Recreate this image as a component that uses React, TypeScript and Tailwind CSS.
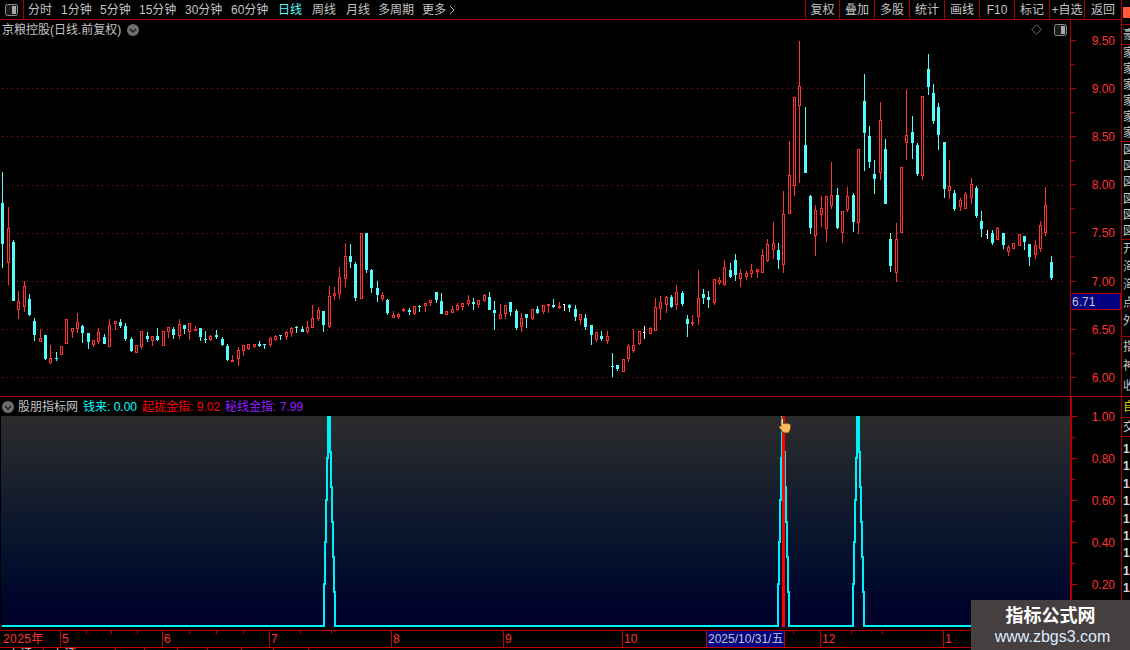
import React from 'react';

type Candle = [number, number, number, number, number, string];

// coordinates read off the crops: x*3, y*3 relative to the crop origin
const candleSets: { ox: number; oy: number; items: Candle[] }[] = [
  {
    ox: 0,
    oy: 170,
    items: [
      [7, 7, 99, 221, 293, 'c'], [25, 111, 175, 278, 345, 'r'], [40, 210, 216, 392, 392, 'c'], [55, 363, 394, 421, 446, 'r'],
      [73, 334, 349, 412, 426, 'r'], [88, 372, 388, 435, 438, 'c'], [103, 445, 453, 494, 513, 'c'], [121, 477, 505, 515, 515, 'r'],
      [136, 495, 495, 567, 570, 'c'], [151, 525, 565, 579, 581, 'r'], [169, 546, 565, 567, 573, 'c'], [184, 529, 529, 556, 556, 'r'],
      [199, 448, 448, 521, 521, 'r'], [217, 475, 475, 485, 503, 'r'], [232, 430, 457, 476, 489, 'r'], [247, 465, 468, 488, 518, 'c'],
      [265, 489, 489, 515, 537, 'c'], [280, 511, 511, 524, 530, 'r'], [295, 475, 487, 515, 522, 'r'], [313, 492, 501, 521, 521, 'c'],
      [328, 447, 466, 530, 530, 'r'], [346, 452, 454, 461, 480, 'r'], [361, 447, 457, 468, 474, 'c'], [376, 460, 468, 507, 513, 'c'],
      [394, 501, 507, 543, 546, 'c'], [409, 526, 526, 548, 548, 'r'], [424, 484, 484, 530, 537, 'r'], [442, 487, 499, 507, 516, 'c'],
      [457, 499, 499, 513, 528, 'r'], [472, 474, 499, 510, 514, 'c'], [490, 484, 484, 527, 527, 'r'], [505, 472, 472, 485, 504, 'r'],
      [520, 471, 477, 495, 507, 'c'], [538, 447, 463, 497, 507, 'r'], [553, 465, 465, 477, 492, 'c'], [568, 458, 460, 485, 510, 'r'],
      [586, 468, 477, 482, 484, 'R'], [601, 474, 474, 501, 513, 'c'], [616, 483, 507, 510, 519, 'c'], [631, 496, 499, 510, 513, 'r'],
      [649, 480, 495, 501, 507, 'c'], [667, 502, 507, 525, 528, 'c'], [682, 522, 528, 570, 573, 'c'], [697, 556, 571, 576, 576, 'R'],
      [715, 532, 541, 567, 587, 'r'], [730, 525, 526, 542, 558, 'r'], [745, 522, 523, 537, 540, 'r'], [763, 523, 523, 531, 534, 'r'],
      [778, 514, 522, 528, 531, 'c'], [793, 522, 522, 524, 537, 'c'], [811, 502, 504, 525, 531, 'r'], [826, 496, 498, 510, 513, 'r'],
      [841, 495, 495, 497, 510, 'c'], [859, 483, 487, 500, 510, 'r'], [874, 471, 474, 488, 501, 'r'], [889, 468, 471, 474, 489, 'c'],
      [907, 468, 477, 486, 486, 'c'], [922, 453, 472, 485, 489, 'r'], [937, 405, 445, 473, 474, 'r'], [955, 411, 421, 447, 453, 'r'],
      [970, 423, 423, 465, 486, 'c'], [988, 348, 378, 470, 474, 'r'],
    ],
  },
  {
    ox: 330,
    oy: 220,
    items: [
      [13, 201, 220, 228, 240, 'r'], [28, 141, 172, 221, 237, 'r'], [46, 69, 108, 177, 201, 'r'], [61, 72, 108, 126, 144, 'c'],
      [76, 126, 132, 234, 243, 'c'], [94, 39, 39, 236, 236, 'r'], [109, 39, 39, 150, 159, 'c'], [124, 148, 150, 204, 219, 'c'],
      [142, 183, 204, 225, 246, 'c'], [157, 216, 225, 237, 243, 'r'], [172, 237, 240, 279, 285, 'c'], [190, 273, 285, 293, 293, 'r'],
      [205, 279, 282, 291, 297, 'r'], [220, 264, 267, 273, 276, 'R'], [238, 264, 270, 276, 285, 'c'], [253, 258, 258, 282, 285, 'r'],
      [268, 255, 258, 260, 276, 'c'], [286, 249, 249, 258, 276, 'r'], [301, 240, 240, 248, 258, 'r'], [319, 216, 216, 240, 249, 'c'],
      [334, 219, 243, 282, 282, 'c'], [349, 274, 274, 285, 285, 'r'], [367, 258, 267, 279, 279, 'r'], [382, 249, 255, 270, 273, 'r'],
      [397, 249, 249, 261, 270, 'r'], [415, 225, 240, 252, 258, 'r'], [430, 234, 246, 252, 270, 'c'], [445, 240, 240, 255, 264, 'r'],
      [463, 222, 225, 243, 246, 'r'], [478, 216, 231, 270, 270, 'c'], [493, 243, 270, 279, 330, 'c'], [511, 252, 282, 297, 297, 'r'],
      [526, 255, 255, 282, 297, 'r'], [541, 246, 246, 276, 288, 'c'], [559, 267, 273, 324, 330, 'c'], [574, 279, 294, 321, 336, 'r'],
      [589, 282, 282, 294, 324, 'c'], [607, 267, 267, 297, 300, 'r'], [622, 258, 267, 279, 282, 'c'], [640, 255, 255, 276, 282, 'r'],
      [655, 252, 252, 258, 279, 'R'], [670, 237, 255, 261, 264, 'c'], [688, 246, 258, 264, 267, 'R'], [703, 252, 252, 254, 273, 'w'],
      [718, 252, 255, 264, 276, 'c'], [736, 255, 267, 291, 303, 'c'], [751, 282, 282, 300, 315, 'r'], [766, 282, 294, 321, 330, 'c'],
      [784, 315, 315, 345, 375, 'c'], [799, 336, 336, 360, 366, 'r'], [814, 333, 348, 357, 363, 'c'], [832, 333, 348, 363, 372, 'r'],
      [847, 399, 438, 440, 471, 'c'], [862, 435, 435, 447, 453, 'c'], [880, 417, 417, 456, 456, 'r'], [895, 372, 378, 417, 426, 'r'],
      [910, 327, 375, 393, 399, 'r'], [928, 333, 333, 372, 375, 'r'], [943, 318, 336, 338, 357, 'w'], [961, 321, 324, 342, 342, 'r'],
      [976, 234, 261, 333, 333, 'r'],
    ],
  },
  {
    ox: 660,
    oy: 30,
    items: [
      [0, 798, 817, 837, 870, 'r'], [19, 798, 801, 825, 849, 'r'], [34, 795, 801, 831, 834, 'c'], [49, 765, 786, 825, 840, 'r'],
      [67, 783, 789, 822, 828, 'c'], [82, 855, 867, 882, 921, 'c'], [97, 855, 876, 882, 888, 'R'], [115, 720, 804, 861, 885, 'r'],
      [130, 777, 792, 804, 822, 'c'], [145, 783, 801, 810, 834, 'c'], [163, 747, 747, 819, 825, 'r'], [178, 741, 750, 759, 765, 'r'],
      [193, 690, 711, 765, 768, 'r'], [211, 699, 720, 741, 744, 'c'], [226, 672, 690, 735, 753, 'c'], [241, 717, 729, 747, 771, 'r'],
      [259, 723, 729, 741, 750, 'r'], [274, 702, 720, 732, 744, 'r'], [292, 717, 717, 725, 744, 'r'], [307, 657, 675, 729, 729, 'r'],
      [322, 627, 642, 693, 696, 'r'], [340, 576, 639, 660, 687, 'r'], [355, 639, 660, 690, 717, 'c'], [370, 483, 552, 705, 729, 'r'],
      [388, 333, 435, 552, 552, 'r'], [403, 201, 201, 468, 498, 'r'], [418, 33, 168, 228, 459, 'r'], [436, 231, 345, 429, 429, 'c'],
      [451, 495, 498, 594, 612, 'c'], [466, 525, 540, 618, 678, 'r'], [484, 498, 534, 555, 591, 'r'], [499, 498, 498, 597, 636, 'r'],
      [514, 396, 495, 528, 537, 'r'], [532, 474, 495, 594, 597, 'c'], [547, 543, 543, 609, 639, 'r'], [562, 471, 498, 540, 546, 'r'],
      [580, 489, 495, 576, 606, 'c'], [595, 357, 357, 579, 612, 'r'],
    ],
  },
  {
    ox: 860,
    oy: 40,
    items: [
      [13, 102, 183, 279, 393, 'c'], [28, 258, 288, 366, 384, 'c'], [43, 360, 402, 417, 462, 'c'], [61, 186, 240, 399, 420, 'r'],
      [76, 297, 327, 492, 492, 'c'], [91, 579, 597, 678, 696, 'c'], [109, 549, 597, 699, 726, 'r'], [124, 381, 381, 579, 579, 'r'],
      [139, 147, 285, 309, 360, 'r'], [157, 228, 276, 309, 357, 'c'], [172, 309, 315, 402, 408, 'c'], [187, 168, 168, 408, 420, 'r'],
      [205, 42, 87, 141, 165, 'c'], [220, 132, 159, 243, 252, 'c'], [235, 189, 201, 285, 330, 'c'], [253, 306, 306, 447, 474, 'c'],
      [268, 360, 438, 453, 477, 'r'], [283, 450, 459, 507, 513, 'c'], [301, 474, 480, 501, 513, 'r'], [316, 456, 462, 507, 507, 'r'],
      [334, 414, 432, 474, 492, 'r'], [349, 438, 444, 528, 534, 'c'], [364, 513, 543, 567, 591, 'c'], [382, 570, 582, 584, 597, 'w'],
      [397, 570, 579, 609, 615, 'c'], [412, 561, 564, 600, 600, 'r'], [430, 579, 579, 615, 627, 'c'], [445, 615, 621, 636, 648, 'r'],
      [460, 609, 609, 627, 627, 'r'], [478, 582, 582, 618, 618, 'r'], [493, 588, 588, 606, 630, 'c'], [508, 612, 612, 651, 678, 'c'],
      [526, 600, 615, 645, 657, 'r'], [541, 543, 555, 627, 636, 'r'], [556, 441, 495, 579, 588, 'r'], [574, 648, 666, 714, 720, 'c'],
    ],
  },
];

const RED = '#ff3232';
const CYAN = '#54fcfc';

function Candles() {
  const nodes: React.ReactNode[] = [];
  candleSets.forEach((set) => {
    set.items.forEach(([xz, hiZ, topZ, botZ, lowZ, kind]) => {
      const x = set.ox + Math.floor(xz / 3);
      const hi = set.oy + Math.round(hiZ / 3);
      const top = set.oy + Math.round(topZ / 3);
      const bot = set.oy + Math.round(botZ / 3);
      const low = set.oy + Math.round(lowZ / 3);
      const color = kind === 'c' ? CYAN : kind === 'w' ? '#ffffff' : RED;
      const key = `${x}-${top}`;
      nodes.push(<rect key={`${key}-h`} x={x} y={hi} width={1} height={Math.max(top - hi, 0)} fill={color} />);
      nodes.push(<rect key={`${key}-l`} x={x} y={bot} width={1} height={Math.max(low - bot, 0)} fill={color} />);
      if (kind === 'r') {
        nodes.push(
          <rect key={`${key}-b`} x={x - 0.5} y={top + 0.5} width={2} height={Math.max(bot - top - 1, 1)} fill="#000" stroke={color} />,
        );
      } else if (kind === 'w') {
        nodes.push(<rect key={`${key}-b`} x={x - 1} y={top} width={2} height={1} fill={color} />);
        nodes.push(<rect key={`${key}-m`} x={x} y={hi} width={1} height={low - hi} fill={color} />);
      } else {
        nodes.push(<rect key={`${key}-b`} x={x - 1} y={top} width={3} height={Math.max(bot - top, 1)} fill={color} />);
      }
    });
  });
  return <>{nodes}</>;
}

function peakPoints(c: number) {
  const up = [584, 542, 500, 458, 416];
  const down = [452, 487, 522, 557, 592];
  const pts: string[] = [`${c - 5},626`];
  up.forEach((y, i) => {
    pts.push(`${c - 5 + i},${y}`, `${c - 4 + i},${y}`);
  });
  pts.pop();
  pts.push(`${c + 1},416`);
  down.forEach((y, i) => {
    pts.push(`${c + 1 + i},${y}`, `${c + 2 + i},${y}`);
  });
  pts.push(`${c + 6},626`);
  return pts.join(' ');
}

function PanelIcon() {
  return (
    <svg width="13" height="12" viewBox="0 0 13 12" className="shrink-0">
      <rect x="0.5" y="0.5" width="12" height="11" rx="2" fill="#1c1c1c" stroke="#8c8c8c" />
      <rect x="7" y="2" width="4" height="8" fill="#a8a8a8" />
    </svg>
  );
}

function DownBadge() {
  return (
    <svg width="12" height="12" viewBox="0 0 12 12" className="shrink-0">
      <circle cx="6" cy="6" r="6" fill="#6e6e6e" />
      <path d="M3 5l3 3 3-3" fill="none" stroke="#1a1a1a" strokeWidth="1.4" />
    </svg>
  );
}

const leftTabs = [
  { label: '分时', w: 'w-[33px]' },
  { label: '1分钟', w: 'w-[39px]' },
  { label: '5分钟', w: 'w-[39px]' },
  { label: '15分钟', w: 'w-[46px]' },
  { label: '30分钟', w: 'w-[46px]' },
  { label: '60分钟', w: 'w-[47px]' },
  { label: '日线', w: 'w-[34px]', active: true },
  { label: '周线', w: 'w-[34px]' },
  { label: '月线', w: 'w-[32px]' },
  { label: '多周期', w: 'w-[44px]' },
  { label: '更多', w: 'w-[36px]', more: true },
];

const rightTabs = [
  { label: '复权', w: 'w-[34px]' },
  { label: '叠加', w: 'w-[35px]' },
  { label: '多股', w: 'w-[35px]' },
  { label: '统计', w: 'w-[35px]' },
  { label: '画线', w: 'w-[35px]' },
  { label: 'F10', w: 'w-[35px]' },
  { label: '标记', w: 'w-[35px]' },
  { label: '+自选', w: 'w-[35px]' },
  { label: '返回', w: 'w-[37px]' },
];

const upperLabels = ['9.50', '9.00', '8.50', '8.00', '7.50', '7.00', '6.50', '6.00'];
const lowerLabels = ['1.00', '0.80', '0.60', '0.40', '0.20'];

const timeCells = [
  { label: '2025年', w: 'w-[60px]', first: true },
  { label: '5', w: 'w-[102px]' },
  { label: '6', w: 'w-[107px]' },
  { label: '7', w: 'w-[122px]' },
  { label: '8', w: 'w-[112px]' },
  { label: '9', w: 'w-[119px]' },
  { label: '10', w: 'w-[84px]' },
  { label: '2025/10/31/五', w: 'w-[78px]', hl: true },
  { label: '', w: 'w-[36px]' },
  { label: '12', w: 'w-[123px]' },
  { label: '1', w: 'flex-1' },
];

const bottomCells = ['w-[43px]', 'w-[30px]', 'w-[42px]', 'w-[29px]', 'w-[33px]', 'w-[30px]', 'w-[34px]', 'w-[32px]', 'w-[35px]', 'w-[23px]'];

const sidebarGroups = [
  { h: 'h-[20px]', rows: ['豪'] },
  { h: 'h-[97px]', rows: ['家', '家', '家', '家', '家', '家'] },
  { h: 'h-[98px]', rows: ['図', '図', '図', '図', '図', '図'] },
  { h: 'h-[97px]', rows: ['开', '海', '海', '点', '外', ''] },
  { h: 'h-[60px]', rows: ['指', '神', '收'] },
];

export default function App() {
  return (
    <div className="relative flex h-[650px] w-[1130px] overflow-hidden bg-black text-xs text-[#c4c4c4] [font-family:'Liberation_Sans','Noto_Sans_CJK_SC',sans-serif]">
      <div className="flex w-[1121px] flex-col">
        {/* toolbar */}
        <div className="flex h-5 items-center border-b border-[#a80000]">
          <div className="flex h-full w-6 items-center justify-center border-r border-[#a80000]">
            <PanelIcon />
          </div>
          <div className="flex pl-1">
            {leftTabs.map((t) => (
              <span key={t.label} className={`${t.w} flex items-center whitespace-nowrap ${t.active ? 'text-[#54fcfc]' : ''}`}>
                {t.label}
                {t.more && (
                  <svg width="6" height="10" viewBox="0 0 6 10" className="ml-[3px]">
                    <path d="M1 1l4 4-4 4" fill="none" stroke="#c4c4c4" />
                  </svg>
                )}
              </span>
            ))}
          </div>
          <div className="ml-auto flex h-full">
            {rightTabs.map((t) => (
              <span key={t.label} className={`${t.w} flex items-center justify-center whitespace-nowrap border-l border-[#a80000]`}>
                {t.label}
              </span>
            ))}
          </div>
        </div>

        {/* kline pane */}
        <div className="flex h-[377px] border-b border-[#b00000]">
          <div className="relative w-[1070px]">
            <svg width="1070" height="376" viewBox="0 20 1070 376" className="absolute inset-0" shapeRendering="crispEdges">
              {[88, 136, 185, 233, 281, 329, 377].map((y) => (
                <line key={y} x1="2" x2="1066" y1={y + 0.5} y2={y + 0.5} stroke="#981818" strokeDasharray="1 4" />
              ))}
              <Candles />
            </svg>
            <div className="relative flex h-[18px] items-center gap-[6px] pl-[2px] pt-[1px]">
              <span>京粮控股(日线.前复权)</span>
              <DownBadge />
              <div className="ml-auto flex items-center gap-[12px] pr-[3px]">
                <svg width="11" height="11" viewBox="0 0 11 11">
                  <path d="M5.5 .7l4.8 4.8-4.8 4.8L.7 5.500z" fill="none" stroke="#6e6e6e" />
                </svg>
                <PanelIcon />
              </div>
            </div>
          </div>
          <div className="relative flex-1 border-l border-[#b00000] pr-[6px] text-right text-[#ff3232]">
            <svg width="8" height="376" className="absolute left-0 top-0" shapeRendering="crispEdges">
              {upperLabels.map((l, i) => (
                <g key={l}>
                  <line x1="0" x2="5" y1={20.5 + i * 48.1} y2={20.5 + i * 48.1} stroke="#c00000" />
                  <line x1="0" x2="3" y1={44.5 + i * 48.1} y2={44.5 + i * 48.1} stroke="#c00000" />
                </g>
              ))}
            </svg>
            <div className="-mt-[3px]">
              {upperLabels.map((l) => (
                <div key={l} className="flex h-[48.1px] items-center justify-end">
                  {l}
                </div>
              ))}
            </div>
            <div className="absolute inset-x-0 top-[273px] flex h-[17px] items-center border-y border-r border-[#b00000] bg-[#000080] pl-[1px] text-left text-[#c4c4c4]">
              6.71
            </div>
          </div>
        </div>

        {/* indicator pane */}
        <div className="flex h-[233px]">
          <div className="w-[1070px]">
            <div className="flex h-[19px] items-center whitespace-nowrap pl-[2px]">
              <DownBadge />
              <span className="ml-1">股朋指标网</span>
              <span className="ml-[5px] text-[#00ffff]">钱来: 0.00</span>
              <span className="ml-[5px] text-[#ff0000]">起拢金指: 9.02</span>
              <span className="ml-[5px] text-[#9a1cff]">秘线金指: 7.99</span>
            </div>
            <div className="relative h-[214px]">
              <div className="ml-px h-[211px] bg-linear-to-b from-[#2c2c2c] to-[#00002a]" />
              <svg width="1070" height="214" viewBox="0 416 1070 214" className="absolute inset-0" shapeRendering="crispEdges">
                <polyline
                  points={`2,626 ${peakPoints(329)} ${peakPoints(783)} ${peakPoints(858)} 1070,626`}
                  fill="none"
                  stroke="#00f0f8"
                  strokeWidth="2"
                />
                <rect x="782" y="416" width="3" height="211" fill="#ff0000" />
              </svg>
              {/* mouse pointer resting on the red spike */}
              <svg width="14" height="17" viewBox="0 0 14 17" className="absolute left-[778px] top-[1px]">
                <path
                  d="M3 2c0-1.400 2.400-1.400 2.400 0v4.500h1.200c.8-.8 1.800-.6 2.200 0 .8-.6 1.800-.4 2.200.4.900-.3 1.800.3 1.800 1.300V12l-2 4H5.500L1 10.500c-.6-1.200.9-2.200 2-1.300z"
                  fill="#f9b95c"
                  stroke="#4a2c10"
                  strokeWidth="0.9"
                />
                <path d="M3.700 2h1v6h-1z" fill="#fff2d6" />
              </svg>
            </div>
          </div>
          <div className="relative flex-1 border-l-2 border-[#b00000] pr-[6px] text-right text-[#ff3232]">
            <svg width="8" height="233" className="absolute left-0 top-0" shapeRendering="crispEdges">
              {lowerLabels.map((l, i) => (
                <g key={l}>
                  <line x1="0" x2="5" y1={19.5 + i * 42} y2={19.5 + i * 42} stroke="#c00000" />
                  <line x1="0" x2="3" y1={40.5 + i * 42} y2={40.5 + i * 42} stroke="#c00000" />
                </g>
              ))}
            </svg>
            <div className="-mt-px">
              {lowerLabels.map((l) => (
                <div key={l} className="flex h-[42px] items-center justify-end">
                  {l}
                </div>
              ))}
            </div>
          </div>
        </div>

        {/* time axis */}
        <div className="relative flex h-[18px] border-y border-[#c00000] text-[#ff3232]">
          {timeCells.map((c) => (
            <div
              key={c.label || 'blank'}
              className={`${c.w} flex items-center whitespace-nowrap ${c.first ? 'pl-[3px] tracking-[0.4px]' : 'border-l border-[#c00000] pl-px'} ${c.hl ? 'bg-[#000080] text-[#c4c4c4]' : ''}`}
            >
              {c.label}
            </div>
          ))}
          <svg width="1070" height="3" className="absolute left-0 top-0" shapeRendering="crispEdges">
            {[86, 111, 137, 189, 216, 243, 300, 331, 793, 851, 882].map((x) => (
              <line key={x} x1={x + 0.5} x2={x + 0.5} y1="0" y2="3" stroke="#c00000" />
            ))}
          </svg>
        </div>
        <div className="flex h-[2px] overflow-hidden leading-none">
          {bottomCells.map((w, i) => (
            <div key={i} className={`${w} ${i ? 'border-l border-[#c00000]' : ''} whitespace-nowrap pl-2`}>
              {i < 2 ? '上证' : ''}
            </div>
          ))}
        </div>
      </div>

      {/* right side list, mostly cut off by the window edge */}
      <div className="flex w-[9px] flex-col overflow-hidden border-l border-[#a80000] leading-none">
        <div className="flex h-[25px] items-start border-b border-[#a80000] pl-[1px] pt-[7px]">
          <div className="h-[11px] w-[7px] bg-[#ff5a3c]" />
        </div>
        {sidebarGroups.map((g, i) => (
          <div key={i} className={`${g.h} flex flex-col justify-around whitespace-nowrap border-b border-[#a80000] pl-[1px]`}>
            {g.rows.map((r, j) => (
              <span key={j}>{r}</span>
            ))}
          </div>
        ))}
        <div className="flex h-[21px] items-center border-b border-[#a80000] pl-[1px] text-[#e0d000]">自</div>
        <div className="flex h-[19px] items-center border-b border-[#a80000] pl-[1px]">交</div>
        <div className="flex flex-col gap-[5px] pl-[1px] pt-[6px] font-bold">
          {Array.from({ length: 12 }).map((_, i) => (
            <span key={i} className="h-[12.400px] text-[#d8d8d8]">1</span>
          ))}
        </div>
      </div>

      {/* site watermark over the corner */}
      <div className="absolute bottom-0 right-0 flex h-[50px] w-[159px] flex-col items-center bg-[#453f3f]">
        <span className="mt-[5px] text-[18px] font-bold leading-[22px] text-white">指标公式网</span>
        <span className="ml-[4px] text-[16px] leading-5 text-[#dcecff]">www.zbgs3.com</span>
      </div>
    </div>
  );
}
